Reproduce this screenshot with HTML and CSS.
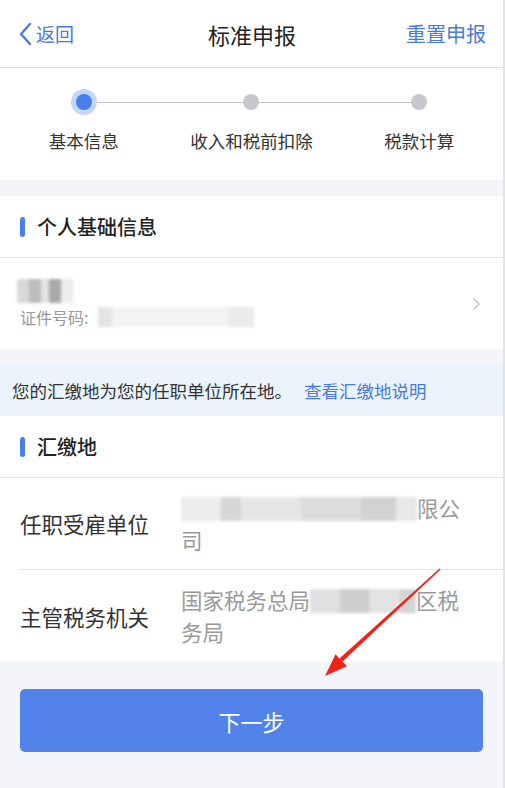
FILE: index.html
```html
<!DOCTYPE html>
<html lang="zh-CN">
<head>
    <meta charset="UTF-8">
    <meta name="viewport" content="width=device-width, initial-scale=1.0">
    <title>标准申报</title>
    <link rel="stylesheet" href="styles.css">
</head>
<body>
    <div class="page">
        <header class="nav">
            <a class="nav-back" href="#">
                <svg width="14" height="24" viewBox="0 0 14 24"><path d="M12 2 L3 12 L12 22" fill="none" stroke="#4a7bd8" stroke-width="2.4" stroke-linecap="round" stroke-linejoin="round"/></svg>
                <span>返回</span>
            </a>
            <div class="nav-title">标准申报</div>
            <a class="nav-action" href="#">重置申报</a>
        </header>

        <section class="stepper">
            <div class="step active">
                <span class="dot"></span>
                <span class="step-label">基本信息</span>
            </div>
            <div class="step">
                <span class="dot"></span>
                <span class="step-label">收入和税前扣除</span>
            </div>
            <div class="step last">
                <span class="dot"></span>
                <span class="step-label">税款计算</span>
            </div>
        </section>

        <section class="card">
            <div class="card-title"><i class="bar"></i>个人基础信息</div>
            <div class="person-row">
                <div class="person-info">
                    <span class="mask mask-name"></span>
                    <div class="person-id">证件号码:<span class="mask mask-id"></span></div>
                </div>
                <svg class="chevron" width="9" height="14" viewBox="0 0 9 14"><path d="M2 2 L7 7 L2 12" fill="none" stroke="#c4c4c4" stroke-width="1.6" stroke-linecap="round" stroke-linejoin="round"/></svg>
            </div>
        </section>

        <div class="notice">您的汇缴地为您的任职单位所在地。<a href="#">查看汇缴地说明</a></div>

        <section class="card flush">
            <div class="card-title"><i class="bar"></i>汇缴地</div>
            <div class="field">
                <div class="field-label">任职受雇单位</div>
                <div class="field-value"><span class="mask mask-company"></span>限公司</div>
            </div>
            <div class="field">
                <div class="field-label">主管税务机关</div>
                <div class="field-value">国家税务总局<span class="mask mask-bureau"></span>区税务局</div>
            </div>
        </section>

        <div class="footer">
            <button class="btn-next">下一步</button>
        </div>

        <svg class="annotation" width="505" height="788" viewBox="0 0 505 788">
            <polygon points="439.6,568.4 440.6,569.6 342.6,661.6 339.4,658.6" fill="#f0231b"/>
            <polygon points="325,676 335.6,654.2 341,660.2 347,666.2" fill="#f0231b"/>
        </svg>
    </div>
</body>
</html>
```

FILE: styles.css
```css
* {
    box-sizing: border-box;
}
body {
    margin: 0;
    background: #f4f5f9;
    font-family: "Noto Sans CJK SC", "Noto Sans", sans-serif;
    color: #333;
}
a {
    text-decoration: none;
}
.page {
    position: relative;
    width: 505px;
    min-height: 788px;
    border-right: 2px solid #e2e3e6;
    background: #f4f5f9;
}
.nav {
    display: grid;
    grid-template-columns: 1fr auto 1fr;
    align-items: center;
    height: 68px;
    padding: 0 17px 0 18px;
    background: #fff;
    border-bottom: 1px solid #dcdcdc;
}
.nav-back {
    display: flex;
    align-items: center;
    gap: 4px;
    color: #4a7bd8;
    font-size: 19px;
}
.nav-title {
    font-size: 22px;
    color: #222;
}
.nav-action {
    justify-self: end;
    color: #4a7bd8;
    font-size: 20px;
}
.stepper {
    display: grid;
    grid-template-columns: repeat(3, 1fr);
    padding: 26px 0 27px;
    background: #fff;
}
.step {
    position: relative;
    display: flex;
    flex-direction: column;
    align-items: center;
}
.step::after {
    content: "";
    position: absolute;
    top: 8px;
    left: 50%;
    width: 100%;
    height: 1px;
    background: #c4c6ce;
}
.step.last::after {
    display: none;
}
.dot {
    position: relative;
    z-index: 1;
    width: 16px;
    height: 16px;
    border-radius: 50%;
    background: #c6c8d0;
}
.step.active .dot {
    background: #4a7fe8;
    box-shadow: 0 0 0 5px #c2d6f8;
}
.step-label {
    margin-top: 19px;
    font-size: 17.5px;
    line-height: 24px;
    color: #333;
}
.card {
    margin-top: 16px;
    background: #fff;
}
.card.flush {
    margin-top: 0;
}
.card-title {
    display: flex;
    align-items: center;
    gap: 12px;
    height: 62px;
    padding-left: 20px;
    font-size: 20px;
    font-weight: 500;
    color: #222;
    border-bottom: 1px solid #e3e3e3;
}
.bar {
    width: 5px;
    height: 20px;
    border-radius: 3px;
    background: #4a7fe8;
}
.person-row {
    display: flex;
    align-items: center;
    justify-content: space-between;
    height: 91px;
    padding: 0 22px 0 17px;
}
.person-info {
    display: flex;
    flex-direction: column;
    gap: 2px;
}
.person-id {
    display: flex;
    align-items: center;
    gap: 10px;
    padding-left: 3px;
    font-size: 16px;
    color: #999;
}
.mask {
    display: inline-block;
    filter: blur(1.5px);
}
.mask-name {
    width: 56px;
    height: 24px;
    background:
        linear-gradient(90deg, #d9d9d9 0 12px, #bdbdbd 12px 24px, #e3e3e3 24px 32px, #a9a9a9 32px 44px, #ececec 44px);
}
.mask-id {
    width: 156px;
    height: 20px;
    background: linear-gradient(90deg, #e4e4e4 0 14px, #f3f3f3 14px 130px, #ebebeb 130px);
}
.notice {
    margin-top: 15px;
    height: 52px;
    padding-left: 12px;
    display: flex;
    align-items: center;
    font-size: 17.5px;
    color: #333;
    background: #ebf3fd;
}
.notice a {
    margin-left: 12px;
    color: #4a7bd8;
}
.field {
    display: grid;
    grid-template-columns: 161px 290px;
    align-items: center;
    height: 92px;
    margin-left: 20px;
    border-bottom: 1px solid #e3e3e3;
}
.field:last-child {
    border-bottom: none;
}
.field-label {
    font-size: 21.5px;
    color: #333;
}
.field-value {
    font-size: 21.5px;
    line-height: 32px;
    color: #9a9a9a;
}
.mask-company {
    width: 236px;
    height: 24px;
    vertical-align: -4px;
    background: linear-gradient(90deg, #ececec 0 40px, #d6d6d6 40px 60px, #e6e6e6 60px 120px, #dcdcdc 120px 180px, #d2d2d2 180px 215px, #e8e8e8 215px);
}
.mask-bureau {
    width: 106px;
    height: 24px;
    vertical-align: -4px;
    background: linear-gradient(90deg, #e0e0e0 0 30px, #cfcfcf 30px 60px, #e3e3e3 60px 90px, #d4d4d4 90px);
}
.footer {
    padding: 27px 20px 37px;
}
.btn-next {
    display: block;
    width: 100%;
    height: 63px;
    border: none;
    border-radius: 5px;
    background: #5283eb;
    color: #fff;
    font-family: inherit;
    font-size: 22px;
}
.annotation {
    position: absolute;
    top: 0;
    left: 0;
    pointer-events: none;
}
```
